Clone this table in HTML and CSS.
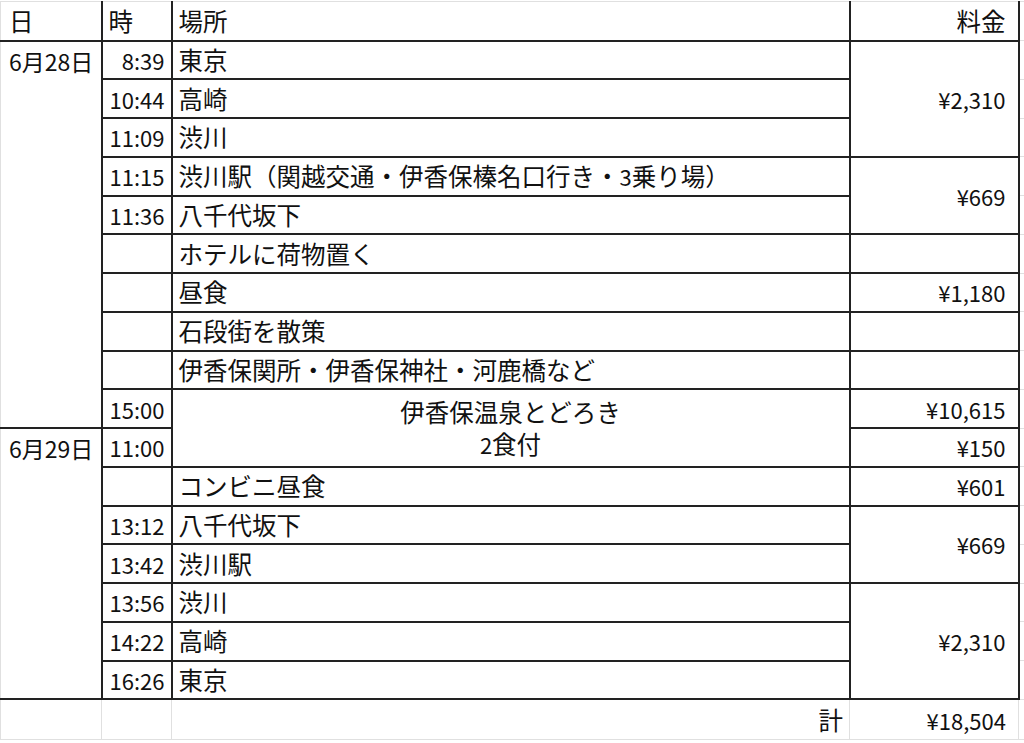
FILE: index.html
```html
<!DOCTYPE html>
<html lang="ja">
<head>
<meta charset="utf-8">
<title>旅程</title>
<link rel="stylesheet" href="styles.css">
</head>
<body>
<table class="sheet">
  <colgroup>
    <col class="c-day">
    <col class="c-time">
    <col class="c-place">
    <col class="c-fee">
    <col class="c-extra">
  </colgroup>
  <thead>
    <tr class="head">
      <th class="day">日</th>
      <th class="time">時</th>
      <th class="place">場所</th>
      <th class="fee">料金</th>
      <th class="extra"></th>
    </tr>
  </thead>
  <tbody>
    <tr>
      <td class="day" rowspan="10">6月28日</td>
      <td class="time">8:39</td>
      <td class="place">東京</td>
      <td class="fee" rowspan="3">¥2,310</td>
      <td class="extra"></td>
    </tr>
    <tr>
      <td class="time">10:44</td>
      <td class="place">高崎</td>
      <td class="extra"></td>
    </tr>
    <tr>
      <td class="time">11:09</td>
      <td class="place">渋川</td>
      <td class="extra"></td>
    </tr>
    <tr>
      <td class="time">11:15</td>
      <td class="place">渋川駅（関越交通・伊香保榛名口行き・<span class="digit">3</span>乗り場）</td>
      <td class="fee" rowspan="2">¥669</td>
      <td class="extra"></td>
    </tr>
    <tr>
      <td class="time">11:36</td>
      <td class="place">八千代坂下</td>
      <td class="extra"></td>
    </tr>
    <tr>
      <td class="time"></td>
      <td class="place">ホテルに荷物置く</td>
      <td class="fee"></td>
      <td class="extra"></td>
    </tr>
    <tr>
      <td class="time"></td>
      <td class="place">昼食</td>
      <td class="fee">¥1,180</td>
      <td class="extra"></td>
    </tr>
    <tr>
      <td class="time"></td>
      <td class="place">石段街を散策</td>
      <td class="fee"></td>
      <td class="extra"></td>
    </tr>
    <tr>
      <td class="time"></td>
      <td class="place">伊香保関所・伊香保神社・河鹿橋など</td>
      <td class="fee"></td>
      <td class="extra"></td>
    </tr>
    <tr>
      <td class="time">15:00</td>
      <td class="place hotel" rowspan="2"><span class="hotel-line">伊香保温泉とどろき</span><span class="hotel-line"><span class="digit">2</span>食付</span></td>
      <td class="fee">¥10,615</td>
      <td class="extra"></td>
    </tr>
    <tr>
      <td class="day" rowspan="7">6月29日</td>
      <td class="time">11:00</td>
      <td class="fee">¥150</td>
      <td class="extra"></td>
    </tr>
    <tr>
      <td class="time"></td>
      <td class="place">コンビニ昼食</td>
      <td class="fee">¥601</td>
      <td class="extra"></td>
    </tr>
    <tr>
      <td class="time">13:12</td>
      <td class="place">八千代坂下</td>
      <td class="fee" rowspan="2">¥669</td>
      <td class="extra"></td>
    </tr>
    <tr>
      <td class="time">13:42</td>
      <td class="place">渋川駅</td>
      <td class="extra"></td>
    </tr>
    <tr>
      <td class="time">13:56</td>
      <td class="place">渋川</td>
      <td class="fee" rowspan="3">¥2,310</td>
      <td class="extra"></td>
    </tr>
    <tr>
      <td class="time">14:22</td>
      <td class="place">高崎</td>
      <td class="extra"></td>
    </tr>
    <tr>
      <td class="time">16:26</td>
      <td class="place">東京</td>
      <td class="extra"></td>
    </tr>
  </tbody>
  <tfoot>
    <tr class="total">
      <td class="day"></td>
      <td class="time"></td>
      <td class="place sum-label">計</td>
      <td class="fee">¥18,504</td>
      <td class="extra"></td>
    </tr>
  </tfoot>
</table>
</body>
</html>
```

FILE: styles.css
```css
html, body {
  margin: 0;
  padding: 0;
  background: #ffffff;
}

body {
  font-family: "Noto Sans CJK JP", "Noto Sans", sans-serif;
  font-size: 24.5px;
  color: #111111;
  overflow: hidden;
}

.sheet {
  border-collapse: collapse;
  table-layout: fixed;
  width: 1030px;
  margin-top: 1px;
}

.c-day { width: 101px; }
.c-time { width: 70px; }
.c-place { width: 678px; }
.c-fee { width: 169px; }
.c-extra { width: 12px; }

.sheet th,
.sheet td {
  border: 1px solid #e0e0e0;
  padding: 0 6px;
  font-weight: normal;
  white-space: nowrap;
  vertical-align: middle;
  line-height: 28px;
}

.sheet tbody td {
  border: 2px solid #222222;
}

.sheet tbody tr {
  height: 38.76px;
}

.sheet tbody td.extra,
.sheet thead th.extra,
.sheet tfoot td {
  border: 1px solid #e0e0e0;
}

.sheet tbody td.day {
  border-left: 1px solid #e0e0e0;
  vertical-align: top;
  text-align: left;
  padding: 0 4px 0 8px;
  line-height: 38px;
  font-size: 23px;
}

.head {
  height: 39px;
}

.head th {
  border-top: 1px solid #e0e0e0;
  border-right: 2px solid #222222;
  border-bottom: 2px solid #222222;
  text-align: left;
}

.head th.day {
  border-left: 1px solid #e0e0e0;
  padding-left: 8px;
}

.head th.extra {
  border-right: 1px solid #e0e0e0;
  border-bottom: 1px solid #e0e0e0;
}

.time {
  text-align: right;
  padding-right: 5px;
}

.sheet tbody td.time {
  font-size: 22px;
}

.head th.time {
  text-align: left;
}

.place {
  text-align: left;
  padding-left: 6px;
}

.digit {
  font-size: 22px;
}

.fee {
  text-align: right;
  padding-right: 12px !important;
}

.sheet tbody td.fee,
.sheet tfoot td.fee {
  font-size: 22px;
}

.head th.fee {
  text-align: right;
}

.hotel {
  text-align: center;
  padding-bottom: 3px;
}

.hotel-line {
  display: block;
  line-height: 32px;
}

.total {
  height: 40px;
}

.total td {
  border-top: 2px solid #222222;
}

.sum-label {
  text-align: right;
  padding-right: 9px;
}
```
